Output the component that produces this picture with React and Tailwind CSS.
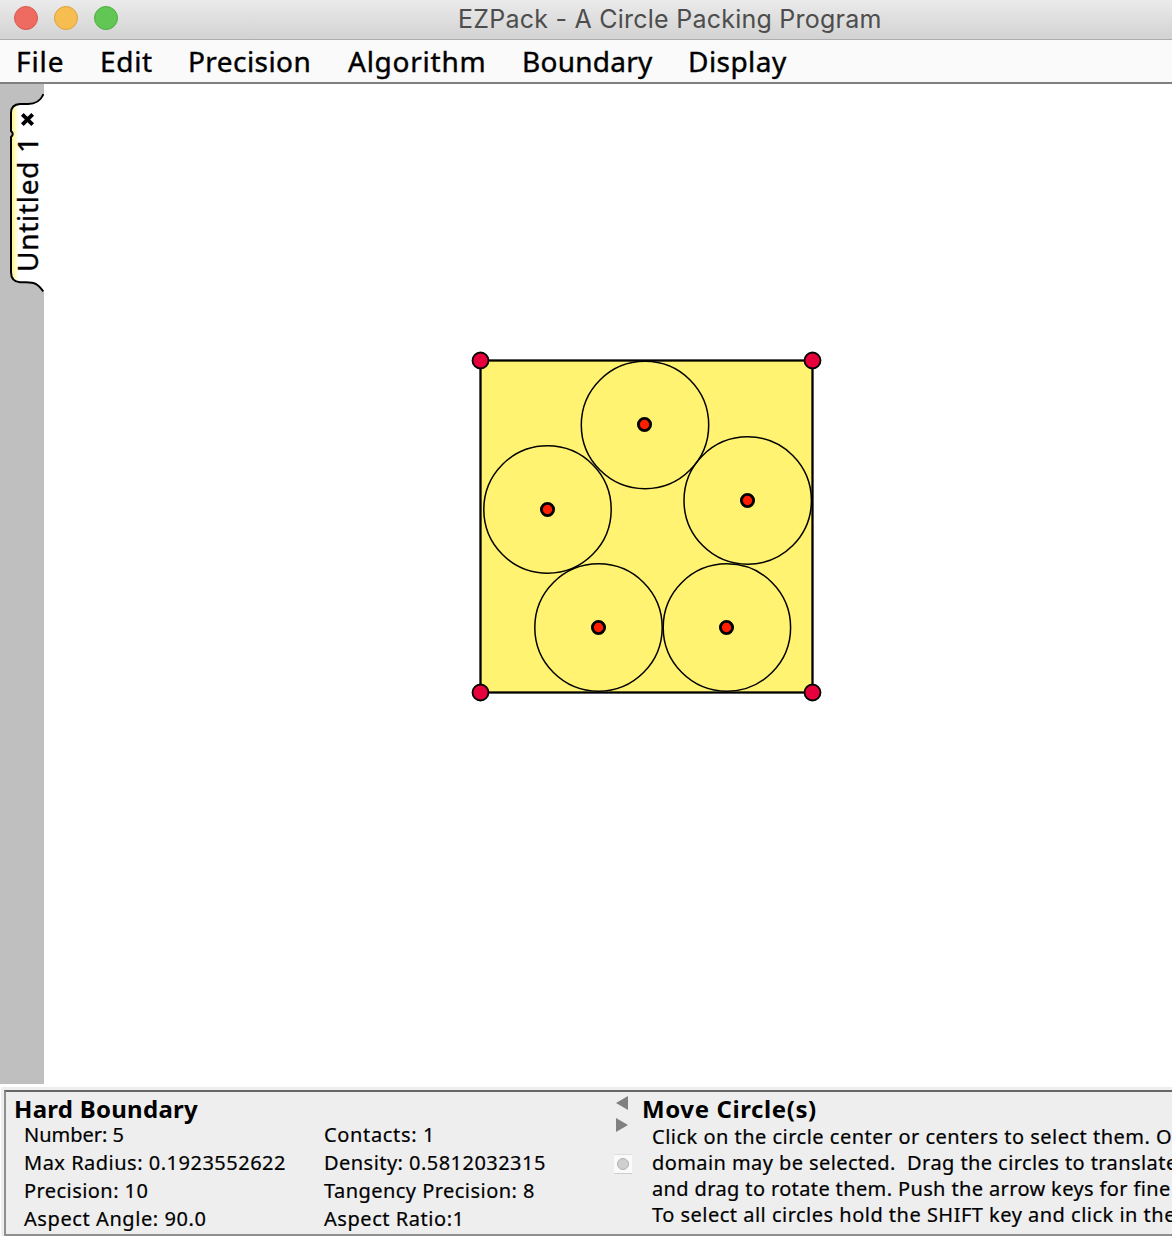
import React from "react";

const SANS = "font-['Noto_Sans','Open_Sans',sans-serif]";

function TitleBar() {
  return (
    <header className="flex h-10 items-start border-b border-[#adadad] bg-gradient-to-b from-[#ebebeb] to-[#d2d2d2]">
      <div className="flex gap-4 pl-3.5 pt-1.5">
        <span className="size-6 rounded-full border border-[#d9594f] bg-[#ed6b60]" />
        <span className="size-6 rounded-full border border-[#dda23c] bg-[#f6be50]" />
        <span className="size-6 rounded-full border border-[#4fae42] bg-[#62c655]" />
      </div>
      <h1 className="ml-[340px] whitespace-nowrap font-[Inter,sans-serif] text-[25px] leading-[38px] tracking-[0.24px] text-[#4d4d4d]">
        EZPack - A Circle Packing Program
      </h1>
    </header>
  );
}

function MenuBar() {
  return (
    <nav className="flex h-11 border-b-2 border-[#808080] bg-[#fafafa] pl-4 text-[28px] leading-[42px] text-black [-webkit-text-stroke:0.4px_#000]">
      <span className="w-[84px] tracking-[0.9px]">File</span>
      <span className="w-[88px] tracking-[0.67px]">Edit</span>
      <span className="w-[160px] tracking-[0.43px]">Precision</span>
      <span className="w-[174px] tracking-[0.75px]">Algorithm</span>
      <span className="w-[166px] tracking-[0.25px]">Boundary</span>
      <span className="tracking-[0.45px]">Display</span>
    </nav>
  );
}

function SideTab() {
  return (
    <div className="relative mt-2 h-[202px] w-11">
      <svg className="absolute inset-0" width="44" height="202" viewBox="0 92 44 202" fill="none">
        <defs>
          <linearGradient id="tabShade" gradientUnits="userSpaceOnUse" x1="11" y1="0" x2="19" y2="0">
            <stop offset="0" stopColor="#fff47a" />
            <stop offset="0.5" stopColor="#fffbc4" />
            <stop offset="1" stopColor="#ffffff" />
          </linearGradient>
        </defs>
        <path
          d="M44 93.5C41.5 99 38 104 28 104H20Q11 104.500 11 113V131Q13.500 134 11 137V272Q11 281.500 20 282.300H26C35 282.300 38 284 44 292Z"
          fill="url(#tabShade)"
        />
        <path
          d="M43.500 94C41.500 99 38 104 28 104H20Q11 104.500 11 113V131Q14.500 134 11 137V272Q11 281.500 20 282.300H26C35 282.300 38 284 43.300 291.500"
          stroke="#000"
          strokeWidth="2"
        />
        <path d="M22.300 114.300L32.700 124.700M32.700 114.300L22.300 124.700" stroke="#000" strokeWidth="3.800" />
      </svg>
      <span className="absolute left-[6px] top-[44px] h-[136px] rotate-180 whitespace-nowrap text-[28px] leading-[42px] tracking-[0.7px] [-webkit-text-stroke:0.4px_#000] [writing-mode:vertical-rl]">
        Untitled 1
      </span>
    </div>
  );
}

const CIRCLES = [
  [645, 425],
  [547.5, 509.5],
  [747.7, 500.5],
  [598.5, 627.5],
  [726.9, 627.5],
];
const CENTERS = [
  [644.5, 424.5],
  [547.5, 509.5],
  [747.5, 500.5],
  [598.5, 627.5],
  [726.5, 627.5],
];
const CORNERS = [
  [480.5, 360.5],
  [812.5, 360.5],
  [480.5, 692.5],
  [812.5, 692.5],
];

function PackingCanvas() {
  return (
    <main className="flex-1 bg-white">
      <svg width="1128" height="1000" viewBox="44 84 1128 1000" stroke="#000">
        <rect x="480.500" y="360.500" width="332" height="332" fill="#fff371" strokeWidth="2.300" />
        {CIRCLES.map(([x, y]) => (
          <circle key={`c${x}`} cx={x} cy={y} r="63.700" fill="none" strokeWidth="1.500" />
        ))}
        {CENTERS.map(([x, y]) => (
          <circle key={`d${x}`} cx={x} cy={y} r="6.100" fill="#ff1e00" strokeWidth="2.900" />
        ))}
        {CORNERS.map(([x, y]) => (
          <circle key={`${x}-${y}`} cx={x} cy={y} r="8" fill="#e6003c" strokeWidth="1.800" />
        ))}
      </svg>
    </main>
  );
}

function StatusPanel() {
  return (
    <footer className="h-[149px] bg-white pl-px">
      <div className="h-full border-t-[3px] border-[#eeeeee] bg-[#eeeeee] pl-[3px]">
        <div className="flex h-full border-y-2 border-l-2 border-b-[#8f8f8f] border-l-[#8f8f8f] border-t-[#666666] text-[20px]">
          <section className="w-[608px] pl-2 pt-[5px]">
            <h2 className="text-[24px] font-bold leading-6 tracking-[0.27px]">Hard Boundary</h2>
            <div className="grid grid-cols-[300px_1fr] whitespace-nowrap pl-2.5 leading-7 [-webkit-text-stroke:0.2px_#000]">
              <span className="tracking-[-0.02px]">Number: 5</span>
              <span className="tracking-[0.65px]">Contacts: 1</span>
              <span className="tracking-[0.5px]">Max Radius: 0.1923552622</span>
              <span className="tracking-[0.46px]">Density: 0.5812032315</span>
              <span className="tracking-[0.44px]">Precision: 10</span>
              <span className="tracking-[0.46px]">Tangency Precision: 8</span>
              <span className="tracking-[0.58px]">Aspect Angle: 90.0</span>
              <span className="tracking-[0.55px]">Aspect Ratio:1</span>
            </div>
          </section>
          <div className="flex w-[28px] shrink-0 flex-col pt-1">
            <svg className="ml-0.5" width="12" height="14" viewBox="0 0 12 14" fill="#808080">
              <path d="M12 0V14L0 7Z" />
            </svg>
            <svg className="ml-0.5 mt-2" width="12" height="14" viewBox="0 0 12 14" fill="#808080">
              <path d="M0 0V14L12 7Z" />
            </svg>
            <div className="mt-[22px] flex h-5 w-[18px] items-center justify-center border-b border-t border-b-[#cccccc] border-t-[#dddddd] bg-[#fafafa]">
              <span className="size-3 rounded-full border border-[#b0b0b0] bg-[#cfcfcf]" />
            </div>
          </div>
          <section className="flex-1 overflow-hidden whitespace-pre pt-[5px]">
            <h2 className="mb-[3px] text-[24px] font-bold leading-6 tracking-[0.6px]">Move Circle(s)</h2>
            <div className="flex flex-col pl-2.5 leading-[26px] [-webkit-text-stroke:0.2px_#000]">
              <span className="tracking-[0.49px]">Click on the circle center or centers to select them. O</span>
              <span className="tracking-[0.42px]">{"domain may be selected.  Drag the circles to translate"}</span>
              <span className="tracking-[0.37px]">and drag to rotate them. Push the arrow keys for fine</span>
              <span className="tracking-[0.49px]">To select all circles hold the SHIFT key and click in the</span>
            </div>
          </section>
        </div>
      </div>
    </footer>
  );
}

export default function App() {
  return (
    <div className={`flex h-[1236px] w-[1172px] flex-col overflow-hidden bg-white text-black ${SANS}`}>
      <TitleBar />
      <MenuBar />
      <div className="mb-[3px] flex h-[1000px]">
        <aside className="w-11 shrink-0 bg-[#bfbfbf]">
          <SideTab />
        </aside>
        <PackingCanvas />
      </div>
      <StatusPanel />
    </div>
  );
}
